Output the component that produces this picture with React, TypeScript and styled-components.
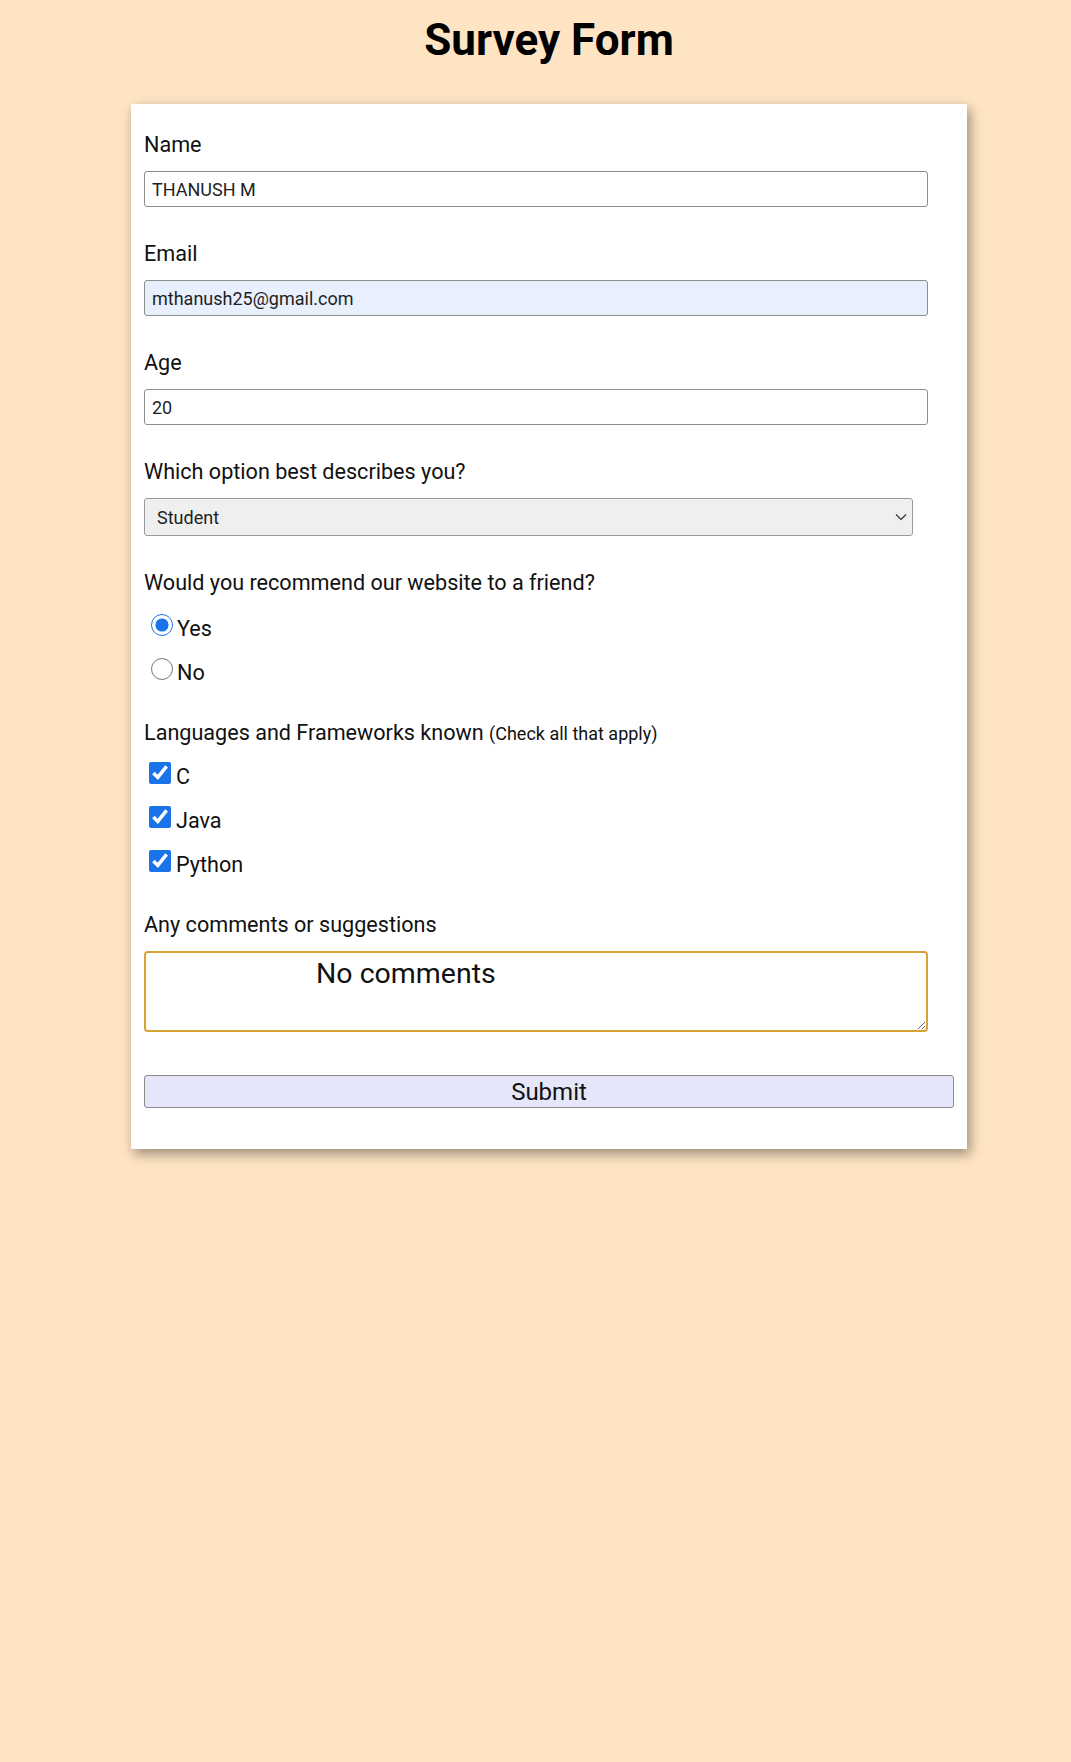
import React from "react";
import styled, { createGlobalStyle } from "styled-components";

const GlobalStyle = createGlobalStyle`
  body {
    margin: 0;
    background-color: #ffe4c4;
    font-family: Roboto, "Noto Sans", sans-serif;
    color: #111;
  }
`;

const Page = styled.div`
  padding: 14px 104px 40px 131px;
`;

const Title = styled.h1`
  margin: 0 0 38px;
  text-align: center;
  font-size: 44px;
  line-height: 52px;
  font-weight: 700;
  color: #000;
`;

const Card = styled.form`
  background: #fff;
  padding: 28px 13px 41px;
  box-shadow: 3px 5px 12px rgba(0, 0, 0, 0.4);
`;

const Field = styled.div`
  margin-bottom: 34px;
`;

const Label = styled.label`
  display: block;
  font-size: 21.6px;
  line-height: 26px;
  margin-bottom: 13px;
`;

const Question = styled.p`
  margin: 0;
  font-size: 21.6px;
  line-height: 26px;
`;

const Hint = styled.span`
  font-size: 18px;
`;

const TextInput = styled.input<{ $autofill?: boolean }>`
  display: block;
  box-sizing: border-box;
  width: calc(95% + 14px);
  height: 36px;
  padding: 0 7px;
  border: 1px solid #8d8d8d;
  border-radius: 3px;
  font-family: Roboto, sans-serif;
  font-size: 18px;
  color: #1f1f1f;
  background-color: ${({ $autofill }) => ($autofill ? "#e8f0fe" : "#fff")};
  outline: none;
`;

const SelectWrap = styled.div`
  position: relative;
  width: calc(95% - 1px);
`;

const Select = styled.select`
  appearance: none;
  display: block;
  box-sizing: border-box;
  width: 100%;
  height: 38px;
  padding: 0 12px;
  border: 1px solid #9a9a9a;
  border-radius: 3px;
  background: #efefef;
  font-family: Roboto, sans-serif;
  font-size: 18px;
  color: #1f1f1f;
  outline: none;
`;

const Chevron = styled.svg`
  position: absolute;
  right: 6px;
  top: 50%;
  transform: translateY(-50%);
  pointer-events: none;
`;

const OptionGroup = styled.div<{ $top: number }>`
  margin: ${({ $top }) => $top}px 0 25px;
`;

const OptionRow = styled.label`
  display: block;
  height: 44px;
  font-size: 21.6px;
  line-height: 44px;
`;

const Radio = styled.input`
  width: 22px;
  height: 22px;
  margin: 0 4px 0 7px;
  vertical-align: baseline;
  accent-color: #1a73e8;
`;

const Checkbox = styled.input`
  width: 22px;
  height: 22px;
  margin: 0 5px 0 5px;
  vertical-align: baseline;
  accent-color: #1a73e8;
`;

const Comments = styled.textarea`
  display: block;
  box-sizing: border-box;
  width: calc(95% + 14px);
  height: 81px;
  padding: 4px 6px;
  border: 2px solid #d9a234;
  border-radius: 4px;
  font-family: Roboto, sans-serif;
  font-size: 28.5px;
  line-height: 34px;
  text-indent: 164px;
  color: #111;
  outline: none;
`;

const Submit = styled.button`
  display: block;
  width: 100%;
  height: 33px;
  margin-top: 43px;
  padding: 0;
  border: 1px solid #8a8a8a;
  border-radius: 3px;
  background: #e6e6fa;
  font-family: Roboto, sans-serif;
  font-size: 24px;
  color: #111;
`;

const languages = ["C", "Java", "Python"];

export default function App() {
  return (
    <>
      <GlobalStyle />
      <Page>
        <Title>Survey Form</Title>
        <Card onSubmit={(e) => e.preventDefault()}>
          <Field>
            <Label htmlFor="name">Name</Label>
            <TextInput id="name" type="text" defaultValue="THANUSH M" />
          </Field>
          <Field>
            <Label htmlFor="email">Email</Label>
            <TextInput id="email" type="email" $autofill defaultValue="mthanush25@gmail.com" />
          </Field>
          <Field>
            <Label htmlFor="age">Age</Label>
            <TextInput id="age" type="number" defaultValue="20" />
          </Field>
          <Field>
            <Label htmlFor="role">Which option best describes you?</Label>
            <SelectWrap>
              <Select id="role" defaultValue="student">
                <option value="student">Student</option>
                <option value="job">Full Time Job</option>
                <option value="learner">Full Time Learner</option>
                <option value="other">Other</option>
              </Select>
              <Chevron width="12" height="7" viewBox="0 0 12 7">
                <path d="M1 1l5 5 5-5" fill="none" stroke="#333" strokeWidth="1.2" />
              </Chevron>
            </SelectWrap>
          </Field>

          <Question>Would you recommend our website to a friend?</Question>
          <OptionGroup $top={11}>
            <OptionRow>
              <Radio type="radio" name="recommend" value="yes" defaultChecked />
              Yes
            </OptionRow>
            <OptionRow>
              <Radio type="radio" name="recommend" value="no" />
              No
            </OptionRow>
          </OptionGroup>

          <Question>
            Languages and Frameworks known <Hint>(Check all that apply)</Hint>
          </Question>
          <OptionGroup $top={8}>
            {languages.map((lang) => (
              <OptionRow key={lang}>
                <Checkbox type="checkbox" value={lang} defaultChecked />
                {lang}
              </OptionRow>
            ))}
          </OptionGroup>

          <Field>
            <Label htmlFor="comments">Any comments or suggestions</Label>
            <Comments id="comments" defaultValue="No comments" />
          </Field>
          <Submit type="submit">Submit</Submit>
        </Card>
      </Page>
    </>
  );
}
